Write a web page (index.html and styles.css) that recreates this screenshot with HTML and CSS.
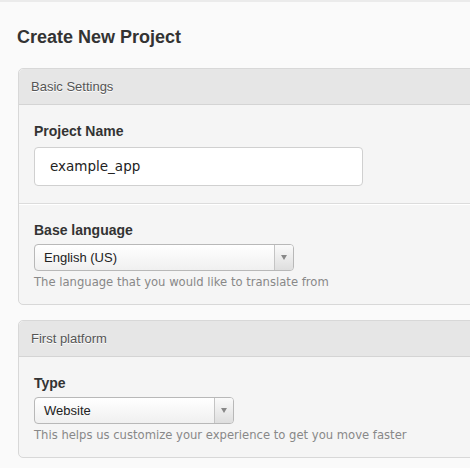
FILE: index.html
```html
<!DOCTYPE html>
<html>
<head>
<meta charset="utf-8">
<link rel="stylesheet" href="styles.css">
</head>
<body>
<div class="page">
  <h1 class="title">Create New Project</h1>
  <div class="panel">
    <div class="panel-head">Basic Settings</div>
    <div class="section first">
      <div class="label">Project Name</div>
      <div class="input">example_app</div>
    </div>
    <div class="section">
      <div class="label">Base language</div>
      <div class="select lang">
        <span class="select-text">English (US)</span>
        <span class="select-arrow"><span class="tri"></span></span>
      </div>
      <div class="help">The language that you would like to translate from</div>
    </div>
  </div>
  <div class="panel">
    <div class="panel-head">First platform</div>
    <div class="section last">
      <div class="label">Type</div>
      <div class="select type">
        <span class="select-text">Website</span>
        <span class="select-arrow"><span class="tri"></span></span>
      </div>
      <div class="help">This helps us customize your experience to get you move faster</div>
    </div>
  </div>
</div>
</body>
</html>
```
FILE: styles.css
```css
html, body {
  margin: 0;
  padding: 0;
  background: #fafafa;
  overflow: hidden;
}
body {
  font-family: "Liberation Sans", Arial, sans-serif;
  color: #333;
  border-top: 2px solid #ebebeb;
}
.page {
  padding: 0 0 0 18px;
  width: 700px;
}
.title {
  margin: 0 0 0 -1px;
  padding: 24px 0 0 0;
  font-size: 18px;
  line-height: 22px;
  font-weight: bold;
  color: #333;
  height: 42px;
}
.panel {
  border: 1px solid #d8d8d8;
  border-radius: 5px;
  background: #f5f5f5;
  margin-bottom: 15px;
}
.panel-head {
  height: 35px;
  line-height: 35px;
  background: #e6e6e6;
  border-bottom: 1px solid #d4d4d4;
  border-radius: 5px 5px 0 0;
  padding-left: 12px;
  font-size: 13px;
  color: #555;
  text-shadow: 0 1px 0 #fff;
}
.section {
  padding: 16px 15px 14px 15px;
}
.section.first {
  padding-bottom: 17px;
  border-bottom: 1px solid #dcdcdc;
  box-shadow: 0 1px 0 #fff;
}
.section.last {
  padding-bottom: 14px;
}
.label {
  font-size: 14px;
  font-weight: bold;
  line-height: 20px;
  color: #333;
  margin-bottom: 6px;
}
.section:not(.first) .label {
  margin-bottom: 4px;
}
.input {
  width: 312px;
  height: 37px;
  line-height: 37px;
  border: 1px solid #d0d0d0;
  border-radius: 4px;
  background: #fff;
  padding-left: 15px;
  font-family: "DejaVu Sans", Verdana, sans-serif;
  font-size: 13.5px;
  color: #222;
}
.select {
  display: flex;
  height: 25px;
  border: 1px solid #b8b8b8;
  border-radius: 4px;
  background: linear-gradient(#ffffff, #f0f0f0);
  box-sizing: content-box;
  overflow: hidden;
}
.select.lang { width: 258px; }
.select.type { width: 198px; }
.select-text {
  flex: 1;
  line-height: 25px;
  padding-left: 9px;
  font-size: 13px;
  color: #222;
}
.select-arrow {
  width: 18px;
  border-left: 1px solid #c4c4c4;
  background: linear-gradient(#fafafa, #dedede);
  display: flex;
  align-items: center;
  justify-content: center;
}
.tri {
  width: 0;
  height: 0;
  border-left: 3.5px solid transparent;
  border-right: 3.5px solid transparent;
  border-top: 5px solid #888;
}
.help {
  margin-top: 3px;
  font-family: "DejaVu Sans", Verdana, sans-serif;
  font-size: 11.6px;
  line-height: 16px;
  color: #888;
}
```
